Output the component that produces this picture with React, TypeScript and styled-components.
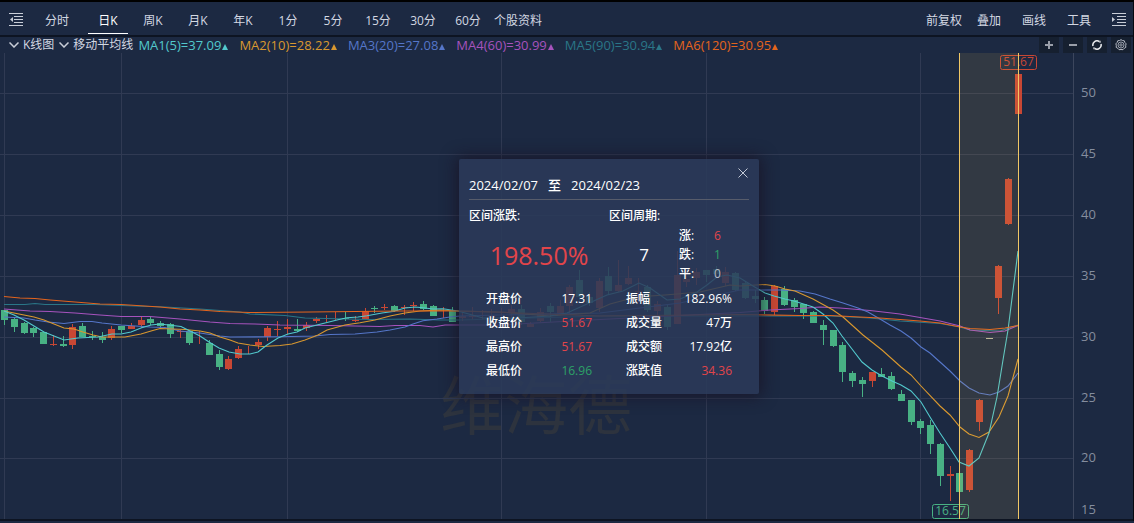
import React, { useState } from "react";
import styled, { createGlobalStyle, css } from "styled-components";

const palette = {
  bg: "#1c2942",
  text: "#d3d8e2",
  up: "#c84734",
  down: "#48b184",
  grid: "#303a53",
  marker: "#f0c765",
};

const GlobalStyle = createGlobalStyle`
  * { box-sizing: border-box; }
  body {
    margin: 0;
    background: ${palette.bg};
    color: ${palette.text};
    font-family: "Open Sans", "Noto Sans CJK SC", sans-serif;
    font-size: 12px;
    line-height: 16px;
  }
  button { font: inherit; color: inherit; background: none; border: 0; padding: 0; cursor: pointer; }
  svg { display: block; }
`;

const Page = styled.main`
  border-top: 2px solid #000;
  border-right: 1px solid #05080f;
`;

const Toolbar = styled.header`
  display: flex;
  align-items: stretch;
  justify-content: space-between;
  height: 35px;
  border-bottom: 2px solid #0d1422;
`;

const ToolGroup = styled.nav`
  display: flex;
  gap: 5px;
  padding-bottom: 1px;
`;

const IconButton = styled.button<{ $width: number; $inset?: number }>`
  display: flex;
  align-items: center;
  justify-content: center;
  width: ${(p) => p.$width}px;
  padding: 3px 0 0 ${(p) => p.$inset ?? 0}px;
`;

const Tab = styled.button<{ $active?: boolean; $width?: number }>`
  width: ${(p) => p.$width ?? 40}px;
  padding-top: 6px;
  border-bottom: 1px solid transparent;
  white-space: nowrap;
  ${(p) =>
    p.$active &&
    css`
      color: #fff;
      border-bottom-color: #fff;
    `}
`;

const Legend = styled.div`
  display: flex;
  justify-content: space-between;
  height: 16px;
`;

const LegendItems = styled.div`
  display: flex;
  align-items: center;
  padding-left: 9px;
  gap: 5px;
  white-space: nowrap;
`;

const LegendToggle = styled.button`
  display: flex;
  align-items: center;
  gap: 4px;
`;

const Averages = styled.div`
  display: flex;
  gap: 11px;
  font-size: 13px;
`;

const Average = styled.span<{ $color: string }>`
  display: flex;
  align-items: center;
  color: ${(p) => p.$color};
  &::after {
    content: "";
    margin: 4px 0 0 1px;
    border: 3px solid transparent;
    border-top: 0;
    border-bottom: 6px solid currentColor;
  }
`;

const ChartTools = styled.div`
  display: flex;
  gap: 4px;
  padding-right: 2px;
`;

const ChartTool = styled.button`
  display: flex;
  align-items: center;
  justify-content: center;
  width: 20px;
  background: #162030;
`;

const ChartArea = styled.section`
  position: relative;
  border-bottom: 2px solid #0d1422;
`;

const ChartSvg = styled.svg`
  width: 100%;
  height: auto;
  font-size: 12px;
`;

const Popup = styled.aside`
  position: absolute;
  left: 459px;
  top: 106px;
  width: 300px;
  padding: 10px 10px 11px;
  border-radius: 2px;
  background: rgba(43, 58, 90, 0.86);
  box-shadow: 0 0 16px 2px rgba(24, 16, 34, 0.75);
  color: #fff;
`;

const CloseButton = styled.button`
  position: absolute;
  right: 11px;
  top: 9px;
`;

const PopupHead = styled.div`
  display: flex;
  align-items: center;
  gap: 10px;
  height: 31px;
  padding-top: 2px;
  border-bottom: 1px solid #575c6b;
  font-size: 13px;
  font-weight: 500;
`;

const Summary = styled.div`
  display: grid;
  grid-template-columns: 140px 70px 1fr;
  padding-top: 6px;
`;

const SummaryLabel = styled.div<{ $span?: number }>`
  grid-column: span ${(p) => p.$span ?? 1};
  line-height: 20px;
  font-weight: 500;
`;

const Figure = styled.div<{ $size: number; $color?: string }>`
  align-self: center;
  text-align: center;
  font-size: ${(p) => p.$size}px;
  line-height: 32px;
  color: ${(p) => p.$color ?? "#fff"};
`;

const DayCounts = styled.dl`
  display: grid;
  grid-template-columns: 35px 1fr;
  margin: 0;
  line-height: 19px;
`;

const Stats = styled.div`
  display: grid;
  grid-template-columns: 1fr 1fr;
  padding-top: 4px;
`;

const StatList = styled.dl`
  display: grid;
  grid-template-columns: auto auto;
  justify-content: space-between;
  margin: 0;
  padding: 0 17px;
  line-height: 24px;
`;

const Term = styled.dt`
  font-weight: 500;
`;

const Value = styled.dd<{ $color?: string; $right?: boolean }>`
  margin: 0;
  text-align: ${(p) => (p.$right ? "right" : "left")};
  color: ${(p) => p.$color ?? "#fff"};
  font-weight: ${(p) => (p.$color ? 400 : 500)};
`;

const RED = "#e2454a";
const GREEN = "#2da267";

const periods: { label: string; width?: number }[] = [
  { label: "分时", width: 52 },
  { label: "日K" },
  { label: "周K" },
  { label: "月K" },
  { label: "年K" },
  { label: "1分" },
  { label: "5分" },
  { label: "15分" },
  { label: "30分" },
  { label: "60分" },
  { label: "个股资料", width: 50 },
];

const averages = [
  { label: "MA1(5)=37.09", color: "#52c9cd" },
  { label: "MA2(10)=28.22", color: "#d9982f" },
  { label: "MA3(20)=27.08", color: "#5576c9" },
  { label: "MA4(60)=30.99", color: "#a653bd" },
  { label: "MA5(90)=30.94", color: "#2a7687" },
  { label: "MA6(120)=30.95", color: "#e4641d" },
];

/* Each candle: direction, high, body top, body bottom, low (chart units). */
type Candle = ["u" | "d" | "t" | "n", number, number, number, number];
const candles: Candle[] = [
  ["d", 310, 310, 320, 325], ["d", 318, 319, 327, 332], ["d", 322, 323, 333, 334], ["d", 327, 328, 333, 337],
  ["d", 332, 332, 344, 344], ["u", 335, 344, 345, 346], ["d", 336, 344, 346, 347], ["u", 324, 327, 345, 349],
  ["d", 323, 326, 337, 337], ["d", 331, 336, 337, 340], ["d", 332, 337, 340, 343], ["u", 326, 329, 338, 340],
  ["d", 326, 326, 330, 333], ["u", 323, 326, 329, 329], ["u", 316, 320, 325, 328], ["d", 317, 319, 323, 325],
  ["d", 321, 323, 326, 328], ["d", 323, 324, 334, 338], ["u", 330, 331, 332, 338], ["d", 331, 331, 343, 345],
  ["t", 331, 0, 0, 344], ["d", 340, 343, 355, 355], ["d", 350, 354, 367, 370], ["u", 356, 359, 369, 370],
  ["u", 346, 349, 358, 359], ["t", 346, 0, 0, 354], ["u", 339, 342, 345, 349], ["u", 326, 328, 337, 341],
  ["u", 321, 329, 330, 336], ["u", 319, 327, 329, 334], ["d", 319, 329, 331, 332], ["u", 322, 325, 328, 331],
  ["u", 317, 319, 321, 323], ["t", 315, 0, 0, 322], ["t", 312, 0, 0, 320], ["d", 312, 318, 319, 321],
  ["u", 316, 320, 321, 322], ["u", 308, 311, 319, 319], ["d", 306, 308, 309, 313], ["u", 304, 307, 308, 310],
  ["d", 305, 306, 311, 312], ["u", 305, 307, 308, 315], ["u", 302, 305, 306, 311], ["d", 301, 304, 309, 310],
  ["d", 305, 306, 316, 316], ["t", 307, 0, 0, 318], ["d", 307, 311, 322, 322], ["u", 312, 316, 318, 321],
  ["u", 307, 316, 317, 320], ["t", 310, 0, 0, 320], ["u", 309, 315, 317, 319], ["t", 308, 0, 0, 318],
  ["u", 305, 309, 313, 322], ["d", 305, 309, 322, 325], ["u", 322, 324, 327, 327], ["u", 308, 312, 321, 322],
  ["d", 303, 306, 312, 322], ["u", 300, 306, 314, 315], ["u", 285, 287, 306, 315], ["d", 270, 280, 297, 300],
  ["d", 292, 297, 303, 306], ["u", 278, 281, 308, 312], ["d", 267, 276, 291, 294], ["u", 260, 285, 291, 292],
  ["u", 266, 278, 284, 285], ["u", 278, 291, 292, 300], ["d", 285, 287, 310, 312], ["u", 301, 304, 311, 315],
  ["d", 305, 307, 327, 330], ["u", 251, 275, 324, 324], ["u", 270, 279, 282, 287], ["u", 268, 272, 278, 285],
  ["d", 270, 270, 275, 282], ["d", 266, 269, 274, 276], ["u", 267, 272, 283, 286], ["d", 272, 273, 290, 291],
  ["d", 281, 283, 298, 299], ["d", 290, 296, 299, 303], ["d", 297, 300, 311, 314], ["u", 285, 286, 312, 315],
  ["d", 286, 289, 305, 306], ["d", 298, 300, 307, 312], ["d", 304, 304, 313, 319], ["d", 311, 312, 323, 323],
  ["d", 320, 325, 330, 345], ["d", 330, 330, 346, 347], ["d", 342, 345, 372, 382], ["d", 371, 373, 381, 387],
  ["d", 377, 380, 384, 397], ["u", 372, 372, 381, 387], ["d", 368, 374, 377, 377], ["d", 372, 376, 389, 390],
  ["d", 390, 394, 401, 401], ["d", 400, 400, 422, 425], ["d", 419, 421, 428, 434], ["d", 420, 425, 444, 454],
  ["d", 443, 444, 476, 486], ["u", 466, 474, 476, 501], ["d", 473, 473, 492, 492], ["u", 449, 450, 490, 492],
  ["u", 399, 400, 422, 431], ["n", 0, 338, 339, 0], ["u", 265, 266, 298, 314], ["u", 178, 179, 224, 225],
  ["u", 74, 74, 114, 114],
];

const lines: { color: string; points: string }[] = [
  {
    color: "#2a7687",
    points:
      "4,304.5 25,304.5 35,303.5 45,304.5 95,304.5 135,306 165,307 200,309 240,312 250,314 285,315.5 305,318 370,319.5 410,319 440,320 460,320 600,316 740,316 830,316 870,318 900,321 940,323.5 960,327 970,330 1000,331 1018,325",
  },
  {
    color: "#a653bd",
    points:
      "4,309 30,311 50,311.5 75,313 100,315 121,316.5 150,316.5 180,319 210,322 230,323.5 255,324 280,325 330,325.5 380,326.5 395,325.5 420,325.5 433,327 445,325 500,325 590,320 740,312.5 770,310 800,308.5 820,307 840,308 870,310.5 900,314 940,321 960,326 970,330 990,332.5 1005,331 1018,325.5",
  },
  {
    color: "#5576c9",
    points:
      "4,317 24,318 35,320 48,322 64,323.5 80,321.5 92,321.5 102,323 121,325 150,327 165,327.5 180,331 200,333 220,336 230,337 280,336.7 315,336 330,334.5 355,334 377,332 390,330 405,327 413,324 423,320.7 437,319 450,317 460,316 500,315 600,313 680,303 740,290 780,290 800,291 815,294 830,299 843,303 858,308 868,312 880,319 890,325 901,331 911,338 921,347 930,353 940,362 950,371 960,381 969,388 979,393 990,395 999,392 1008,386 1018,373",
  },
  {
    color: "#d9982f",
    points:
      "4,311 14,313 24,315 34,317 44,320 54,324 64,328 74,329 83,332 93,335 102,337 125,337 141,334 151,331 160,328.5 185,329.5 200,331 210,333 220,337 230,340 238,343 250,345 263,346.5 280,345.5 292,344 305,340 318,335 327,330 345,325 360,322.7 375,320 390,316 405,313 420,311 440,310 458,311 500,312 550,316 590,313 610,304 625,300 650,296 665,295 700,292 730,285 740,286 765,284.5 775,286 785,289 795,291 813,299 833,310 843,317 863,335 882,350 901,367 911,375 921,386 940,406 950,415 960,427 969,434 979,437.5 989,432 999,417 1008,396 1018,359",
  },
  {
    color: "#52c9cd",
    points:
      "4,311 14,315 24,320 34,326 44,332 54,336 64,340 78,338 98,337 112,334 121,334 131,332 141,328 151,325 160,324 181,326.5 190,331 200,336 209,342 219,348 229,352 240,354 250,354 258,352 267,345 278,338 288,334 297,332 305,328 317,325 327,322.5 338,319.7 347,317.7 358,317 367,315.7 382,313 393,311.5 405,308 415,307 423,307.7 433,309 443,308.7 458,311 483,318 517,318 550,316 567,313 587,304 607,295 623,291 639,283 650,288 667,300 680,299 697,292 707,285 717,277 727,275 740,278 753,286 765,293 774,296 785,299 794,301 813,307 823,314 833,323 842,336 852,349 862,362 872,370 882,376 892,381 901,385 911,391 921,402 930,417 940,433 950,448 959,462 969,466 979,458 989,433 997,397 1003,360 1008,330 1018,251",
  },
  {
    color: "#e4641d",
    points:
      "4,296.5 20,298 35,298.5 50,300 75,302 100,304 121,304.5 160,307 180,309 200,310 220,311.5 250,312.5 310,312 400,311 460,311 520,313 600,316 740,314.5 800,315.5 830,315.5 880,318 920,321 940,323 960,327 970,328.5 990,329.5 1005,328 1018,325.5",
  },
];

const scale: [number, number][] = [
  [50, 93], [45, 154], [40, 215], [35, 276], [30, 337], [25, 398], [20, 458],
];
const monthLines = [4, 121, 287, 501, 706, 920];

const candleX = (i: number) => Math.round(4.1 + 9.747 * i);

function CandleMark({ candle, index }: { candle: Candle; index: number }) {
  const [kind, high, top, bottom, low] = candle;
  const x = candleX(index);
  const fill = kind === "n" ? "#b9b9a0" : kind === "d" ? palette.down : palette.up;
  return (
    <g fill={fill}>
      {kind !== "n" && <rect x={x} y={high} width={1} height={low - high} />}
      {kind !== "t" && <rect x={x - 3} y={top} width={7} height={bottom - top} />}
    </g>
  );
}

function PriceFlag({ x, y, color, children }: { x: number; y: number; color: string; children: string }) {
  return (
    <g>
      <rect x={x + 0.5} y={y + 0.5} width={36} height={14} rx={2} fill="none" stroke={color} />
      <text x={x + 18.5} y={y + 11} textAnchor="middle" fill={color}>
        {children}
      </text>
    </g>
  );
}

function KLineChart() {
  return (
    <ChartSvg viewBox="0 53 1133 466" role="img" aria-label="K线图">
      <text x={536} y={429} textAnchor="middle" fontSize={64} fill="#2d333e">
        维海德
      </text>
      <g fill={palette.grid} shapeRendering="crispEdges">
        {scale.map(([v, y]) => (
          <rect key={v} x={0} y={y} width={1073} height={1} />
        ))}
        {monthLines.map((x) => (
          <rect key={x} x={x} y={53} width={1} height={466} />
        ))}
        <rect x={1073} y={53} width={1} height={466} fill="#3c465d" />
      </g>
      <g shapeRendering="crispEdges">
        {candles.map((c, i) => (
          <CandleMark key={i} candle={c} index={i} />
        ))}
      </g>
      <g fill="none" strokeWidth={1.1}>
        {lines.map((l) => (
          <polyline key={l.color} points={l.points} stroke={l.color} />
        ))}
      </g>
      <PriceFlag x={1000} y={55} color={palette.up}>51.67</PriceFlag>
      <PriceFlag x={932} y={504} color={palette.down}>16.57</PriceFlag>
      <rect x={959} y={53} width={60} height={466} fill="rgba(240,190,80,0.11)" />
      <g fill={palette.marker} shapeRendering="crispEdges">
        <rect x={959} y={53} width={1} height={466} />
        <rect x={1018} y={53} width={1} height={466} />
      </g>
      <g fill="#858d9e" fontSize={13}>
        {scale.map(([v, y]) => (
          <text key={v} x={1081} y={y + 4}>
            {v}
          </text>
        ))}
        <text x={1081} y={514}>15</text>
      </g>
    </ChartSvg>
  );
}

function CollapseIcon({ outward }: { outward?: boolean }) {
  return (
    <svg width="14" height="13" viewBox="0 0 14 13" fill="#c9ced8">
      <g shapeRendering="crispEdges">
        <rect x="0" y="0" width="14" height="1" />
        <rect x="5" y="3" width="9" height="1" />
        <rect x="5" y="6" width="9" height="1" />
        <rect x="5" y="9" width="9" height="1" />
        <rect x="0" y="12" width="14" height="1" />
      </g>
      <path d={outward ? "M0 4v5l3-2.500z" : "M4 4v5L1 6.500z"} />
    </svg>
  );
}

function Chevron() {
  return (
    <svg width="10" height="6" viewBox="0 0 10 6" fill="none" stroke="#c9ced8" strokeWidth="1.500">
      <path d="M.5.5 5 5 9.500.5" />
    </svg>
  );
}

function RangePopup({ onClose }: { onClose: () => void }) {
  return (
    <Popup aria-label="区间统计">
      <CloseButton aria-label="关闭" onClick={onClose}>
        <svg width="10" height="10" viewBox="0 0 10 10" stroke="#c3c9d6" fill="none">
          <path d="M.5.5l9 9M9.500.5l-9 9" />
        </svg>
      </CloseButton>
      <PopupHead>
        <span>2024/02/07</span>
        <span>至</span>
        <span>2024/02/23</span>
      </PopupHead>
      <Summary>
        <SummaryLabel>区间涨跌:</SummaryLabel>
        <SummaryLabel $span={2}>区间周期:</SummaryLabel>
        <Figure $size={25} $color={RED}>198.50%</Figure>
        <Figure $size={17}>7</Figure>
        <DayCounts>
          <Term>涨:</Term>
          <Value $color={RED}>6</Value>
          <Term>跌:</Term>
          <Value $color={GREEN}>1</Value>
          <Term>平:</Term>
          <Value $color="#b4bac8">0</Value>
        </DayCounts>
      </Summary>
      <Stats>
        <StatList>
          <Term>开盘价</Term>
          <Value $right>17.31</Value>
          <Term>收盘价</Term>
          <Value $right $color={RED}>51.67</Value>
          <Term>最高价</Term>
          <Value $right $color={RED}>51.67</Value>
          <Term>最低价</Term>
          <Value $right $color={GREEN}>16.96</Value>
        </StatList>
        <StatList>
          <Term>振幅</Term>
          <Value $right>182.96%</Value>
          <Term>成交量</Term>
          <Value $right>47万</Value>
          <Term>成交额</Term>
          <Value $right>17.92亿</Value>
          <Term>涨跌值</Term>
          <Value $right $color={RED}>34.36</Value>
        </StatList>
      </Stats>
    </Popup>
  );
}

export default function App() {
  const [period, setPeriod] = useState("日K");
  const [open, setOpen] = useState(true);
  return (
    <>
      <GlobalStyle />
      <Page>
        <Toolbar>
          <ToolGroup>
            <IconButton $width={26} $inset={6} aria-label="收起侧栏">
              <CollapseIcon />
            </IconButton>
            {periods.map((p) => (
              <Tab
                key={p.label}
                $width={p.width}
                $active={p.label === period}
                onClick={() => setPeriod(p.label)}
              >
                {p.label}
              </Tab>
            ))}
          </ToolGroup>
          <ToolGroup>
            <Tab>前复权</Tab>
            <Tab>叠加</Tab>
            <Tab>画线</Tab>
            <Tab>工具</Tab>
            <IconButton $width={29} $inset={0} aria-label="展开侧栏">
              <CollapseIcon outward />
            </IconButton>
          </ToolGroup>
        </Toolbar>
        <Legend>
          <LegendItems>
            <LegendToggle>
              <Chevron />
              K线图
            </LegendToggle>
            <LegendToggle>
              <Chevron />
              移动平均线
            </LegendToggle>
            <Averages>
              {averages.map((a) => (
                <Average key={a.label} $color={a.color}>
                  {a.label}
                </Average>
              ))}
            </Averages>
          </LegendItems>
          <ChartTools>
            <ChartTool aria-label="放大">
              <svg width="8" height="8" viewBox="0 0 8 8" fill="#9a9fa9" shapeRendering="crispEdges">
                <path d="M0 3h8v2H0zM3 0h2v8H3z" />
              </svg>
            </ChartTool>
            <ChartTool aria-label="缩小">
              <svg width="8" height="8" viewBox="0 0 8 8" fill="#9a9fa9" shapeRendering="crispEdges">
                <path d="M0 3h8v2H0z" />
              </svg>
            </ChartTool>
            <ChartTool aria-label="刷新">
              <svg width="10" height="10" viewBox="0 0 10 10" fill="none" stroke="#e6e8ec" strokeWidth="1.600">
                <path d="M1 6A4.100 4.100 0 0 1 7.300 1.600M9 4A4.100 4.100 0 0 1 2.700 8.400" />
                <path d="M8 .8v2M2 9.200v-2" strokeWidth="1.200" />
              </svg>
            </ChartTool>
            <ChartTool aria-label="设置">
              <svg width="12" height="12" viewBox="0 0 12 12" fill="none" stroke="#b7bcc6">
                <path d="M4.500 1.500 6 .7l1.500.8 1.800.3.6 1.700 1.200 1.300-.4 1.700.1 1.900-1.600.9-1.200 1.400-2-.2-2 .2-1.200-1.400-1.600-.9.1-1.900L.9 4.800l1.200-1.300.6-1.700z" />
                <circle cx="6" cy="6" r="3" strokeWidth=".8" />
                <circle cx="6" cy="6" r="1.200" strokeWidth=".8" />
              </svg>
            </ChartTool>
          </ChartTools>
        </Legend>
        <ChartArea>
          <KLineChart />
          {open && <RangePopup onClose={() => setOpen(false)} />}
        </ChartArea>
      </Page>
    </>
  );
}
